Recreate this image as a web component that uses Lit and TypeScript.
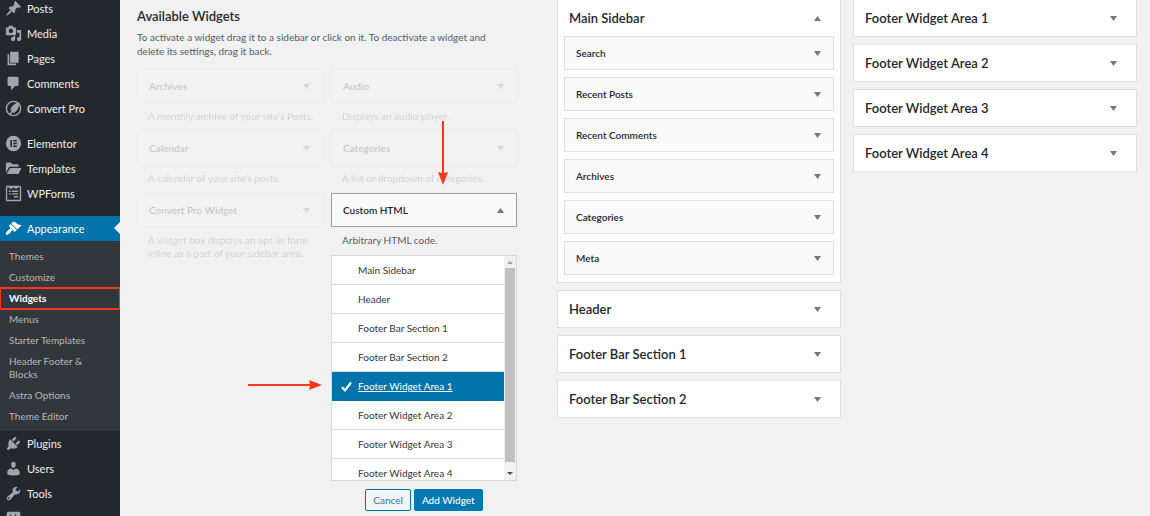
import { LitElement, html, css, svg, nothing } from "lit";
import { customElement, property, state } from "lit/decorators.js";
import { classMap } from "lit/directives/class-map.js";

const FONT = css`Lato, "Open Sans", sans-serif`;

const icons: Record<string, unknown> = {
  posts: svg`<path d="M10.44 3.02l1.82-1.82 6.36 6.35-1.83 1.82c-1.05-.68-2.48-.57-3.41.36l-.75.75c-.92.93-1.04 2.35-.35 3.41l-1.83 1.82-2.41-2.41-2.8 2.79c-.42.42-3.38 2.71-3.8 2.29s1.86-3.39 2.28-3.81l2.79-2.79L4.1 9.36l1.83-1.82c1.05.69 2.48.57 3.4-.36l.75-.75c.93-.92 1.05-2.35.36-3.41z"/>`,
  media: svg`<path fill-rule="evenodd" d="M13 11V4c0-.55-.45-1-1-1h-1.67L9 1H5L3.67 3H2c-.55 0-1 .45-1 1v7c0 .55.45 1 1 1h10c.55 0 1-.45 1-1zM7 4.5c1.38 0 2.5 1.12 2.5 2.5S8.38 9.5 7 9.5 4.5 8.38 4.5 7 5.62 4.5 7 4.5zM14 6h5v10.5c0 1.38-1.12 2.5-2.5 2.5S14 17.88 14 16.5s1.12-2.5 2.5-2.5c.17 0 .34.02.5.05V9h-3V6zm-4 8.05V13h2v3.5c0 1.38-1.12 2.5-2.5 2.5S7 17.88 7 16.5 8.12 14 9.5 14c.17 0 .34.02.5.05z"/>`,
  pages: svg`<path d="M6 15V2h10v13H6zm-1 1h8v2H3V5h2v11z"/>`,
  comments: svg`<path d="M5 2h9c1.1 0 2 .9 2 2v7c0 1.1-.9 2-2 2h-2l-5 5v-5H5c-1.1 0-2-.9-2-2V4c0-1.1.9-2 2-2z"/>`,
  convert: svg`<circle cx="10" cy="10" r="8.4" fill="none" stroke="currentColor" stroke-width="1.6"/><path d="M16.8 2.6C11 4 7 7.400 6.300 12.800L8.500 11.500 4.800 17.200l1.500.6 3.100-4.300.3 2.500C14.500 13 16.600 8.500 16.800 2.600z"/>`,
  elementor: svg`<path fill-rule="evenodd" d="M10 1a9 9 0 1 0 0 18 9 9 0 0 0 0-18zM6.300 6h1.800v8H6.300zM9.600 6h4.200v1.700H9.600zM9.600 9.150h4.200v1.700H9.600zM9.600 12.300h4.200V14H9.600z"/>`,
  templates: svg`<path d="M1 15.500V4.500C1 3.700 1.600 3 2.500 3h4.300l2 2h5.700c.8 0 1.500.7 1.500 1.500V8H6.200c-.9 0-1.600.4-2 1.200z"/><path d="M2.200 16.500L5.500 10c.2-.4.6-.7 1.100-.7h12.800L16.200 15.800c-.2.400-.6.700-1.100.700z"/>`,
  wpforms: svg`<path fill-rule="evenodd" d="M2.500 1h15c.8 0 1.500.7 1.500 1.500v15c0 .8-.7 1.500-1.500 1.500h-15C1.700 19 1 18.300 1 17.500v-15C1 1.700 1.700 1 2.500 1zm.1 1.600v14.800h14.800V2.600h-1.300L13 4.800l-3-2-3 2-3.100-2.200zM4.500 6.500h2.200v1.600H4.500zM8 6.500h7.500v1.600H8zM4.500 9.600h2.200v1.600H4.500zM8 9.600h7.500v1.600H8zM10.500 12.900h5v1.800h-5z"/>`,
  appearance: svg`<path d="M14.480 11.060L7.410 3.990l1.500-1.500c.5-.56 2.300-.47 3.510.32 1.210.8 1.430 1.280 2.910 2.100 1.180.64 2.450 1.260 4.450.85zm-.71.71L6.700 4.700 4.930 6.470c-.39.39-.39 1.020 0 1.410l1.060 1.060c.39.39.39 1.030 0 1.420-.6.6-1.430 1.110-2.210 1.690-.35.26-.7.53-1.010.84C1.430 14.230.4 16.080 1.400 17.070c.99 1 2.840-.03 4.180-1.360.31-.31.58-.66.85-1.020.57-.78 1.080-1.610 1.690-2.210.39-.39 1.020-.39 1.410 0l1.060 1.060c.39.39 1.020.39 1.410 0z"/>`,
  plugins: svg`<path d="M13.110 4.360L9.870 7.600 8 5.730l3.240-3.240c.35-.34 1.050-.2 1.560.32.52.51.66 1.210.31 1.550zm-8 1.770l.91-1.120 9.010 9.010-1.190.84c-.71.71-2.630 1.160-3.820 1.160H6.140L4.900 17.260c-.59.59-1.540.59-2.120 0-.59-.58-.59-1.530 0-2.120l1.240-1.240v-3.880c0-1.130.4-3.190 1.090-3.890zm7.260 3.970l3.240-3.240c.34-.35 1.040-.21 1.550.31.52.51.66 1.210.31 1.550l-3.240 3.250z"/>`,
  users: svg`<path d="M10 9.250c-2.270 0-2.730-3.440-2.730-3.440C7 4.020 7.820 2 9.970 2c2.160 0 2.980 2.020 2.710 3.810 0 0-.41 3.440-2.680 3.440zm0 2.570L12.720 10c2.390 0 4.520 2.330 4.520 4.530v2.490s-3.650 1.130-7.240 1.130c-3.650 0-7.240-1.130-7.240-1.130v-2.490c0-2.250 1.940-4.480 4.470-4.480z"/>`,
  tools: svg`<path d="M16.680 9.770c-1.340 1.340-3.300 1.670-4.950.99l-5.410 6.520c-.99.99-2.590.99-3.580 0s-.99-2.590 0-3.570l6.520-5.420c-.68-1.650-.35-3.610.99-4.950 1.280-1.280 3.120-1.620 4.720-1.060l-2.890 2.890 2.820 2.820 2.860-2.870c.53 1.580.18 3.390-1.080 4.650zM3.810 16.210c.4.39 1.040.39 1.430 0 .4-.4.4-1.040 0-1.430-.39-.4-1.030-.4-1.430 0-.39.39-.39 1.030 0 1.430z"/>`,
  settings: svg`<path fill-rule="evenodd" d="M18 16V4c0-1.100-.9-2-2-2H4c-1.100 0-2 .9-2 2v12c0 1.100.9 2 2 2h12c1.100 0 2-.9 2-2zM7 5v5h1v2H7v3H6v-3H5v-2h1V5zm6 0v3h1v2h-1v5h-1v-5h-1V8h1V5z"/>`,
};

@customElement("admin-menu")
export class AdminMenu extends LitElement {
  static styles = css`
    :host {
      display: block;
      box-sizing: border-box;
      background: #23282d;
      font-family: ${FONT};
      overflow: hidden;
    }
    ul {
      list-style: none;
      margin: 0;
      padding: 0;
    }
    .menu {
      margin-top: -4px;
    }
    .item {
      display: flex;
      align-items: center;
      gap: 5px;
      height: 25px;
      padding-left: 5px;
      color: #eee;
      font-size: 11px;
      line-height: 25px;
      text-decoration: none;
      white-space: nowrap;
    }
    .item svg {
      flex: none;
      width: 17px;
      height: 17px;
      fill: currentColor;
      color: #a0a5aa;
    }
    .spaced {
      margin-top: 10px;
    }
    .current {
      position: relative;
      background: #0073aa;
      color: #fff;
    }
    .item.current svg {
      color: #fff;
    }
    .current::after {
      content: "";
      position: absolute;
      right: 0;
      top: 6px;
      border: 6px solid transparent;
      border-left: 0;
      border-right-color: #f1f1f1;
    }
    .sub {
      background: #32373c;
      padding: 5px 0 4px;
    }
    .sub a {
      display: block;
      padding: 4px 24px 4px 9px;
      color: #b4b9be;
      font-size: 10px;
      line-height: 13px;
      text-decoration: none;
    }
    .sub a.active {
      color: #fff;
      font-weight: 700;
      outline: 2px solid #f9371c;
      outline-offset: -1px;
    }
  `;

  private entry(icon: string, label: string, spaced = false, current = false) {
    return html`<a
      href="#${icon}"
      class=${classMap({ item: true, spaced, current })}
      ><svg viewBox="0 0 20 20" aria-hidden="true">${icons[icon]}</svg>${label}</a
    >`;
  }

  render() {
    const sub = ["Themes", "Customize", "Widgets", "Menus", "Starter Templates", "Header Footer & Blocks", "Astra Options", "Theme Editor"];
    return html`<nav aria-label="Main menu">
      <ul class="menu">
        <li>${this.entry("posts", "Posts")}</li>
        <li>${this.entry("media", "Media")}</li>
        <li>${this.entry("pages", "Pages")}</li>
        <li>${this.entry("comments", "Comments")}</li>
        <li>${this.entry("convert", "Convert Pro")}</li>
        <li>${this.entry("elementor", "Elementor", true)}</li>
        <li>${this.entry("templates", "Templates")}</li>
        <li>${this.entry("wpforms", "WPForms")}</li>
        <li>
          ${this.entry("appearance", "Appearance", true, true)}
          <ul class="sub">
            ${sub.map(
              (s) => html`<li><a href="#sub" class=${classMap({ active: s === "Widgets" })}>${s}</a></li>`
            )}
          </ul>
        </li>
        <li>${this.entry("plugins", "Plugins")}</li>
        <li>${this.entry("users", "Users")}</li>
        <li>${this.entry("tools", "Tools")}</li>
        <li>
          <a href="#settings" class="item" aria-label="Settings"
            ><svg viewBox="0 0 20 20" aria-hidden="true">${icons.settings}</svg></a
          >
        </li>
      </ul>
    </nav>`;
  }
}

@customElement("widget-card")
export class WidgetCard extends LitElement {
  @property() label = "";
  @property() kind: "widget" | "area" = "widget";
  @property({ type: Boolean, reflect: true }) open = false;
  @property({ type: Boolean, reflect: true }) plain = false;

  static styles = css`
    :host {
      display: block;
      font-family: ${FONT};
    }
    .bar {
      display: flex;
      align-items: center;
      justify-content: space-between;
      box-sizing: border-box;
      width: 100%;
      height: 34px;
      margin: 0;
      padding: 0 12px 0 11px;
      border: 1px solid #dddfe1;
      border-radius: 0;
      background: #fafafa;
      color: #23282d;
      font: inherit;
      font-size: 10px;
      font-weight: 600;
      text-align: left;
      white-space: nowrap;
    }
    .area {
      height: 38px;
      padding: 0 19px 0 11px;
      background: #fff;
      font-size: 13px;
    }
    .plain {
      height: 37px;
      padding-top: 1px;
      border: 0;
    }
    .active {
      border-color: #999fa3;
    }
    svg {
      flex: none;
      width: 7px;
      height: 5px;
      fill: #72777c;
    }
    .up {
      transform: rotate(180deg);
    }
  `;

  render() {
    return html`<button
      type="button"
      class=${classMap({
        bar: true,
        area: this.kind === "area",
        plain: this.plain,
        active: this.open && this.kind === "widget",
      })}
      aria-expanded=${this.open ? "true" : "false"}
    >
      ${this.label}<svg class=${classMap({ up: this.open })} viewBox="0 0 7 5" aria-hidden="true"><path d="M0 0h7L3.500 5z" /></svg>
    </button>`;
  }
}

@customElement("area-chooser")
export class AreaChooser extends LitElement {
  @state() private selected = "Footer Widget Area 1";

  static styles = css`
    :host {
      display: block;
      font-family: ${FONT};
    }
    .frame {
      display: flex;
      height: 224px;
      border: 1px solid #d8dadc;
      background: #fff;
    }
    ul {
      flex: 1;
      min-width: 0;
      margin: 0;
      padding: 0;
      list-style: none;
      overflow: hidden;
    }
    .choice {
      display: flex;
      align-items: center;
      box-sizing: border-box;
      width: 100%;
      height: 29px;
      padding: 0;
      border: 0;
      border-bottom: 1px solid #dcdcde;
      background: #fff;
      color: #32373c;
      font: inherit;
      font-size: 10px;
      text-align: left;
      white-space: nowrap;
    }
    .mark {
      display: flex;
      justify-content: flex-end;
      width: 20px;
      margin-right: 6px;
    }
    .mark svg {
      width: 11px;
      height: 11px;
    }
    .chosen {
      background: #0073aa;
      border-color: #0073aa;
      color: #fff;
      text-decoration: underline;
    }
    .bar {
      display: flex;
      flex-direction: column;
      align-items: center;
      width: 12px;
      background: #f1f1f1;
    }
    .bar svg {
      width: 6px;
      height: 12px;
      flex: none;
    }
    .thumb {
      flex: 1;
      width: 10px;
      background: #c1c1c1;
    }
    .end {
      height: 6px;
    }
    .actions {
      display: flex;
      justify-content: center;
      gap: 3px;
      margin-top: 8px;
    }
    .actions button {
      height: 22px;
      padding: 0 7px;
      border: 1px solid #0073aa;
      border-radius: 2px;
      background: #f3f5f6;
      color: #2a7ca6;
      font: inherit;
      font-size: 10px;
      line-height: 20px;
    }
    .actions .primary {
      background: #0079b3;
      border-color: #0079b3;
      color: #fff;
      font-weight: 500;
    }
  `;

  render() {
    const areas = ["Main Sidebar", "Header", "Footer Bar Section 1", "Footer Bar Section 2", "Footer Widget Area 1", "Footer Widget Area 2", "Footer Widget Area 3", "Footer Widget Area 4"];
    return html`
      <div class="frame">
        <ul>
          ${areas.map((a) => {
            const on = a === this.selected;
            return html`<li>
              <button
                type="button"
                class=${classMap({ choice: true, chosen: on })}
                aria-pressed=${on ? "true" : "false"}
                @click=${() => (this.selected = a)}
              >
                <span class="mark">${on
                  ? html`<svg viewBox="0 0 11 11" aria-hidden="true"><path d="M1 6.200L4 9.300 10 1.500" fill="none" stroke="#fff" stroke-width="2.200" /></svg>`
                  : nothing}</span>${a}
              </button>
            </li>`;
          })}
        </ul>
        <div class="bar" aria-hidden="true">
          <svg viewBox="0 0 6 12"><path d="M0 8h6L3 5z" fill="#a3a3a3" /></svg>
          <div class="thumb"></div>
          <div class="end"></div>
          <svg viewBox="0 0 6 12"><path d="M0 4h6L3 7z" fill="#505050" /></svg>
        </div>
      </div>
      <div class="actions">
        <button type="button">Cancel</button>
        <button type="button" class="primary">Add Widget</button>
      </div>
    `;
  }
}

@customElement("app-root")
export class AppRoot extends LitElement {
  static styles = css`
    :host {
      display: grid;
      grid-template-columns: 120px minmax(0, 1fr);
      height: 100vh;
      overflow: hidden;
      background: #f1f1f1;
      color: #23282d;
      font-family: ${FONT};
    }
    main {
      display: grid;
      grid-template-columns: minmax(0, 380fr) minmax(0, 580fr);
      gap: 40px;
      padding: 0 13px 0 17px;
    }
    h1 {
      margin: 7px 0 5px;
      font-size: 13px;
      font-weight: 600;
      line-height: 18px;
    }
    p {
      margin: 0;
    }
    .intro {
      color: #555d66;
      font-size: 10px;
      line-height: 14px;
      margin-bottom: 11px;
      padding-right: 20px;
    }
    .library {
      display: grid;
      grid-template-columns: repeat(2, minmax(0, 1fr));
      gap: 8px;
      align-items: start;
    }
    .about {
      margin: 7px 0 0 11px;
      color: #555d66;
      font-size: 10px;
      line-height: 13px;
    }
    .faded {
      opacity: 0.2;
    }
    .picked {
      position: relative;
    }
    .picked area-chooser {
      margin-top: 8px;
    }
    .pointer {
      position: absolute;
      fill: #f9371c;
    }
    .down {
      left: 106px;
      top: -72px;
    }
    .right {
      left: -83px;
      top: 186px;
    }
    .areas {
      display: grid;
      grid-template-columns: repeat(2, minmax(0, 1fr));
      gap: 12px;
      align-items: start;
      margin-top: -1px;
    }
    .column {
      display: grid;
      gap: 7px;
    }
    .expanded {
      background: #fff;
      border: 1px solid #dddfe1;
      border-top: 0;
      padding-bottom: 7px;
    }
    .stack {
      display: grid;
      gap: 7px;
      padding: 0 6px;
    }
  `;

  private available(name: string, about: string) {
    return html`<article class="faded">
      <widget-card label=${name}></widget-card>
      <p class="about">${about}</p>
    </article>`;
  }

  render() {
    const inSidebar = ["Search", "Recent Posts", "Recent Comments", "Archives", "Categories", "Meta"];
    return html`
      <admin-menu></admin-menu>
      <main>
        <section>
          <h1>Available Widgets</h1>
          <p class="intro">
            To activate a widget drag it to a sidebar or click on it. To deactivate a widget and delete its settings,
            drag it back.
          </p>
          <div class="library">
            ${this.available("Archives", "A monthly archive of your site’s Posts.")}
            ${this.available("Audio", "Displays an audio player.")}
            ${this.available("Calendar", "A calendar of your site’s posts.")}
            ${this.available("Categories", "A list or dropdown of categories.")}
            ${this.available("Convert Pro Widget", "A widget box displays an opt-in form inline as a part of your sidebar area.")}
            <article class="picked">
              <widget-card label="Custom HTML" open></widget-card>
              <p class="about">Arbitrary HTML code.</p>
              <area-chooser></area-chooser>
              <svg class="pointer down" width="12" height="64" viewBox="0 0 12 64" aria-hidden="true">
                <path d="M5 0h2v52l4-1L6 64 1 51l4 1z" />
              </svg>
              <svg class="pointer right" width="74" height="12" viewBox="0 0 74 12" aria-hidden="true">
                <path d="M0 5v2h62l-1 4 13-5L61 1l1 4z" />
              </svg>
            </article>
          </div>
        </section>
        <section class="areas">
          <div class="column">
            <div class="expanded">
              <widget-card kind="area" label="Main Sidebar" open plain></widget-card>
              <div class="stack">${inSidebar.map((w) => html`<widget-card label=${w}></widget-card>`)}</div>
            </div>
            ${["Header", "Footer Bar Section 1", "Footer Bar Section 2"].map(
              (a) => html`<widget-card kind="area" label=${a}></widget-card>`
            )}
          </div>
          <div class="column">
            ${[1, 2, 3, 4].map((n) => html`<widget-card kind="area" label="Footer Widget Area ${n}"></widget-card>`)}
          </div>
        </section>
      </main>
    `;
  }
}
